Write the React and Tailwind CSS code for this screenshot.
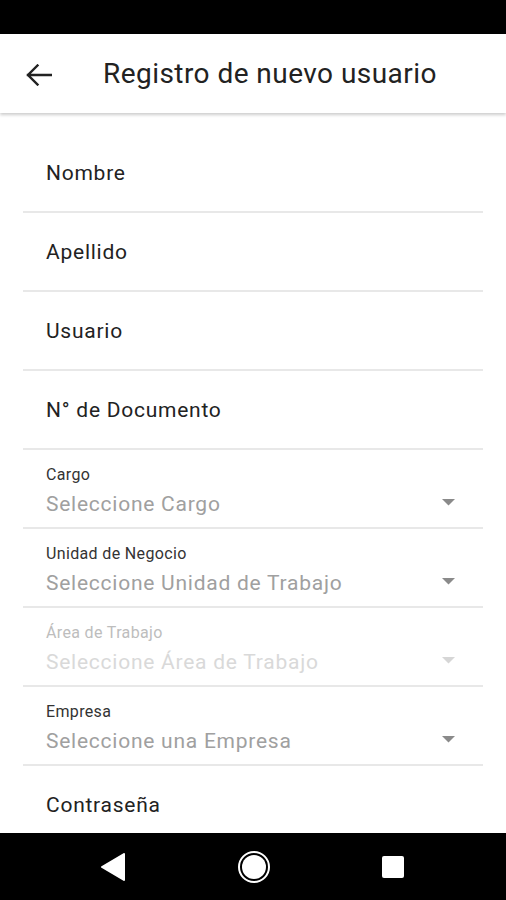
const textFields = ["Nombre", "Apellido", "Usuario", "N° de Documento"]

const selects = [
    { label: "Cargo", placeholder: "Seleccione Cargo" },
    { label: "Unidad de Negocio", placeholder: "Seleccione Unidad de Trabajo" },
    { label: "Área de Trabajo", placeholder: "Seleccione Área de Trabajo", disabled: true },
    { label: "Empresa", placeholder: "Seleccione una Empresa" },
]

function Caret({ disabled }) {
    return (
        <svg width="13" height="7" viewBox="0 0 13 7" className="mr-[28px] mt-[49px]">
            <path d="M0 0 L13 0 L6.5 6.5 Z" fill={disabled ? "#d6d6d6" : "#8a8a8a"} />
        </svg>
    )
}

export default function App() {
    return (
        <div className="w-[506px] h-[900px] flex flex-col bg-white overflow-hidden" style={{ fontFamily: "Roboto, 'Noto Sans', sans-serif" }}>
            <div className="h-[34px] bg-black shrink-0" />
            <div className="h-[79px] shrink-0 flex items-center bg-white shadow-[0_2px_3px_rgba(0,0,0,0.2)] z-10">
                <svg width="26" height="22" viewBox="0 0 26 22" className="ml-[26px] mt-[2px]">
                    <path d="M2 11 H25 M11.5 1.5 L2 11 L11.5 20.5" fill="none" stroke="#222" strokeWidth="2.4" strokeLinecap="square" />
                </svg>
                <div className="ml-[51px] text-[28px] text-[#222] tracking-[0.45px]">Registro de nuevo usuario</div>
            </div>
            <div className="flex-1 overflow-hidden px-[23px] pt-[21px]">
                {textFields.map((t) => (
                    <div key={t} className="h-[79px] flex items-center pt-[3px] border-b-2 border-[#e8e8e8]">
                        <span className="pl-[23px] text-[21px] tracking-[0.75px] text-[#222]">{t}</span>
                    </div>
                ))}
                {selects.map((s) => (
                    <div key={s.label} className="h-[79px] flex items-start justify-between border-b-2 border-[#e8e8e8]">
                        <div className="pl-[23px] flex flex-col pt-[15px]">
                            <span className={"text-[16px] leading-[20px] tracking-[0.35px] " + (s.disabled ? "text-[#bdbdbd]" : "text-[#333]")}>{s.label}</span>
                            <span className={"mt-[4px] text-[21px] leading-[30px] tracking-[0.75px] " + (s.disabled ? "text-[#d9d9d9]" : "text-[#a0a0a0]")}>{s.placeholder}</span>
                        </div>
                        <Caret disabled={s.disabled} />
                    </div>
                ))}
                <div className="h-[79px] flex items-center">
                    <span className="pl-[23px] text-[21px] tracking-[0.75px] text-[#222]">Contraseña</span>
                </div>
            </div>
            <div className="h-[67px] bg-black shrink-0 flex items-center">
                <svg width="26" height="28" viewBox="0 0 26 28" className="ml-[100px]">
                    <path d="M24 1 L24 27 L2 14 Z" fill="white" stroke="white" strokeWidth="2" strokeLinejoin="round" />
                </svg>
                <svg width="34" height="34" viewBox="0 0 34 34" className="ml-[111px]">
                    <circle cx="17" cy="17" r="15" fill="none" stroke="white" strokeWidth="2" />
                    <circle cx="17" cy="17" r="12" fill="white" />
                </svg>
                <div className="ml-[111px] w-[22px] h-[22px] bg-white rounded-[2px]" />
            </div>
        </div>
    )
}
